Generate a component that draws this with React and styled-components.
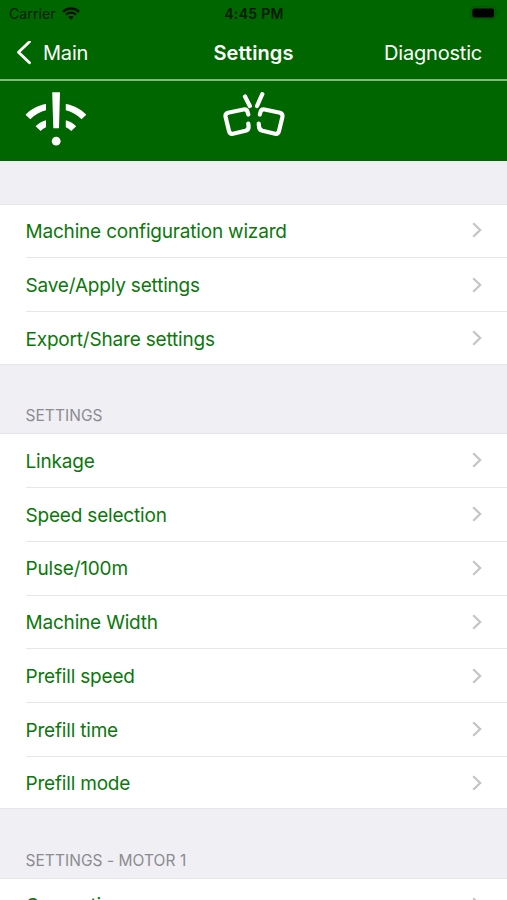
import React from 'react'
import styled, { createGlobalStyle } from 'styled-components'

const color = {
  bar: '#006600',
  barLine: '#7fb77f',
  link: '#0b780b',
  page: '#efeff4',
  line: '#e6e6e8',
  header: '#8b8b90',
  chevron: '#c4c4c7'
}

const GlobalStyle = createGlobalStyle`
html, body {
  margin: 0;
  height: 900px;
  overflow: hidden;
  background: ${color.page};
}

* {
  box-sizing: border-box;
}
`

const Screen = styled.div`
width: 507px;
height: 900px;
overflow: hidden;
background: ${color.page};
font-family: Inter, 'Liberation Sans', sans-serif;
`

const StatusBar = styled.div`
display: grid;
grid-template-columns: 1fr auto 1fr;
align-items: center;
height: 27px;
padding: 0 8px 0 9px;
background: ${color.bar};
color: #001a00;
font-size: 14px;
line-height: 27px;
`

const Carrier = styled.div`
display: flex;
align-items: center;
gap: 6px;
letter-spacing: 0.1px;

svg {
  margin-bottom: 1px;
}
`

const Clock = styled.div`
font-weight: 600;
letter-spacing: 0.3px;
`

const BatterySlot = styled.div`
display: flex;
justify-content: flex-end;
padding-bottom: 1px;
`

const NavBar = styled.div`
display: grid;
grid-template-columns: 1fr auto 1fr;
align-items: center;
height: 54px;
padding: 0 16px;
background: ${color.bar};
border-bottom: 2px solid ${color.barLine};
color: #fff;
font-size: 20px;
line-height: 24px;
`

const BackButton = styled.div`
display: flex;
align-items: center;
gap: 12px;
letter-spacing: -0.2px;
`

const Title = styled.div`
font-weight: 600;
letter-spacing: 0.1px;
`

const NavAction = styled.div`
padding-right: 9px;
text-align: right;
letter-spacing: -0.2px;
`

const ConnectionBar = styled.div`
display: flex;
gap: 136px;
height: 80px;
padding: 10px 25px 0;
background: ${color.bar};
`

const SectionHeader = styled.div`
display: flex;
align-items: flex-end;
height: ${(props) => props.$height}px;
padding: 0 25.5px 8px;
color: ${color.header};
font-size: 15.5px;
line-height: 19px;
letter-spacing: 0.05px;
`

const List = styled.div`
background: #fff;
box-shadow: inset 0 1px ${color.line}, inset 0 -1px ${color.line};
`

const StyledRow = styled.div`
display: flex;
align-items: center;
justify-content: space-between;
height: 53.7px;
margin-left: 25.5px;
padding-right: 25px;
color: ${color.link};
font-size: 19px;
line-height: 24px;
letter-spacing: -0.19px;

& + & {
  border-top: 1px solid ${color.line};
}

span {
  padding-top: 2.6px;
}
`

const sections = [
  { header: '', height: 42.6, rows: ['Machine configuration wizard', 'Save/Apply settings', 'Export/Share settings'] },
  {
    header: 'SETTINGS',
    height: 68.8,
    rows: ['Linkage', 'Speed selection', 'Pulse/100m', 'Machine Width', 'Prefill speed', 'Prefill time', 'Prefill mode']
  },
  { header: 'SETTINGS - MOTOR 1', height: 68.8, rows: ['Gear ratio'] }
]

function WifiIcon() {
  return (
    <svg width="18" height="13" viewBox="0 0 18 13" fill="none" stroke="#001000">
      <path d="M1 4.8C5.5.4 12.5.4 17 4.8" strokeWidth="2.4" />
      <path d="M3.9 7.8C6.8 5 11.2 5 14.1 7.8" strokeWidth="2.2" />
      <path d="M6.3 10.1C7.8 8.7 10.2 8.7 11.7 10.1L9 12.8Z" fill="#001000" stroke="none" />
    </svg>
  )
}

function BatteryIcon() {
  return (
    <svg width="29" height="14" viewBox="0 0 29 14">
      <rect x=".7" y=".7" width="25" height="12.4" rx="3.5" fill="none" stroke="#005200" />
      <rect x="2.3" y="2.4" width="21.8" height="9" rx="2" fill="#000" />
      <path d="M27.2 4.8c1.4.6 1.4 3.6 0 4.2z" fill="#005200" />
    </svg>
  )
}

function BackIcon() {
  return (
    <svg width="15" height="24" viewBox="0 0 15 24" fill="none" stroke="#fff" strokeWidth="2.8">
      <path d="M13.5 .7L2.5 11.2L13.5 21.7" strokeLinecap="round" strokeLinejoin="round" />
    </svg>
  )
}

function NoSignalIcon() {
  return (
    <svg width="62" height="56" viewBox="0 0 62 56" fill="#fff">
      <path d="M27.2 1.2H35L34 37.2H28.3Z" />
      <circle cx="31.2" cy="50.2" r="4.4" />
      <path d="M21 13V19.3C15.5 20.5 10 23.5 5.3 28.2L.5 23.8C6 18 13 14.3 21 13Z" />
      <path d="M40.8 13V19.3C46.3 20.5 51.8 23.5 56.5 28.2L61.3 23.8C55.8 18 48.8 14.3 40.8 13Z" />
      <path d="M21 29.3V36.2C19 37 17.5 38 15.6 39.9L10.6 35.2C13.5 32.3 17 30.3 21 29.3Z" />
      <path d="M40.8 29.3V36.2C42.8 37 44.3 38 46.2 39.9L51.2 35.2C48.3 32.3 44.8 30.3 40.8 29.3Z" />
    </svg>
  )
}

function BrokenLinkIcon() {
  return (
    <svg
      width="63" height="56" viewBox="0 -0.5 63 56"
      fill="none" stroke="#fff" strokeWidth="4.2" strokeLinecap="round" strokeLinejoin="round"
    >
      <path d="M22 5L26.8 14.5M39.3 2.7L34 14.5" />
      <path d="M25.3 23L24.6 20.5Q23.7 17.4 20.5 18L5 21.3Q2 22.3 2.6 25.5L6 39.5Q6.8 42.8 10 42.2L22.5 39.3Q25.8 38.3 25.6 35L25.3 32" />
      <path d="M36.8 23L37.5 20.5Q38.4 17.4 41.6 18L57 21.3Q60 22.3 59.4 25.5L56 39.5Q55.2 42.8 52 42.2L39.5 39.3Q36.2 38.3 36 35L35.7 32" />
    </svg>
  )
}

function Chevron() {
  return (
    <svg width="10" height="16" viewBox="0 0 10 16" fill="none" stroke={color.chevron} strokeWidth="2.2">
      <path d="M1.2 1.2L8.2 8L1.2 14.8" />
    </svg>
  )
}

function Row({ label }) {
  return (
    <StyledRow>
      <span>{label}</span>
      <Chevron />
    </StyledRow>
  )
}

function App() {
  return (
    <Screen>
      <GlobalStyle />
      <StatusBar>
        <Carrier>
          Carrier
          <WifiIcon />
        </Carrier>
        <Clock>4:45 PM</Clock>
        <BatterySlot>
          <BatteryIcon />
        </BatterySlot>
      </StatusBar>
      <NavBar>
        <BackButton>
          <BackIcon />
          Main
        </BackButton>
        <Title>Settings</Title>
        <NavAction>Diagnostic</NavAction>
      </NavBar>
      <ConnectionBar>
        <NoSignalIcon />
        <BrokenLinkIcon />
      </ConnectionBar>
      {sections.map((section) => (
        <React.Fragment key={section.header}>
          <SectionHeader $height={section.height}>{section.header}</SectionHeader>
          <List>
            {section.rows.map((label) => <Row key={label} label={label} />)}
          </List>
        </React.Fragment>
      ))}
    </Screen>
  )
}

export default App
